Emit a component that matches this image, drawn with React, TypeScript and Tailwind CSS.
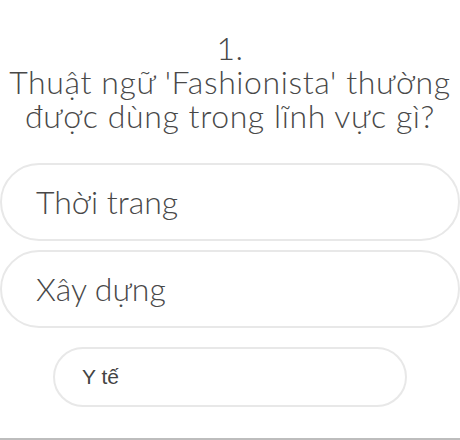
const options = ['Thời trang', 'Xây dựng'];

export default function App() {
  return (
    <div className="w-[460px] h-[440px] overflow-hidden bg-white flex flex-col border-b-2 border-[#bdbdbd]">
      <div
        className="pt-[31px] text-center text-[32px] font-light leading-[34px] tracking-[0.6px] text-[#484848]"
        style={{ fontFamily: 'Lato, "Noto Sans", sans-serif' }}
      >
        <div>1.</div>
        <div className="whitespace-nowrap">Thuật ngữ 'Fashionista' thường</div>
        <div className="whitespace-nowrap">được dùng trong lĩnh vực gì?</div>
      </div>

      <div className="mt-[30px] flex flex-col gap-[9px]">
        {options.map((o) => (
          <button
            key={o}
            className="h-[78px] w-[460px] rounded-full border-2 border-[#e8e8e8] bg-white pl-[34px] text-left text-[32px] font-light text-[#484848]"
            style={{ fontFamily: 'Lato, "Noto Sans", sans-serif' }}
          >
            {o}
          </button>
        ))}
      </div>

      <button
        className="mt-[19px] ml-[53px] h-[60px] w-[354px] rounded-full border-2 border-[#e8e8e8] bg-white pl-[27px] text-left text-[21px] text-[#444444]"
        style={{ fontFamily: '"Liberation Sans", Arial, sans-serif' }}
      >
        Y tế
      </button>
    </div>
  );
}
